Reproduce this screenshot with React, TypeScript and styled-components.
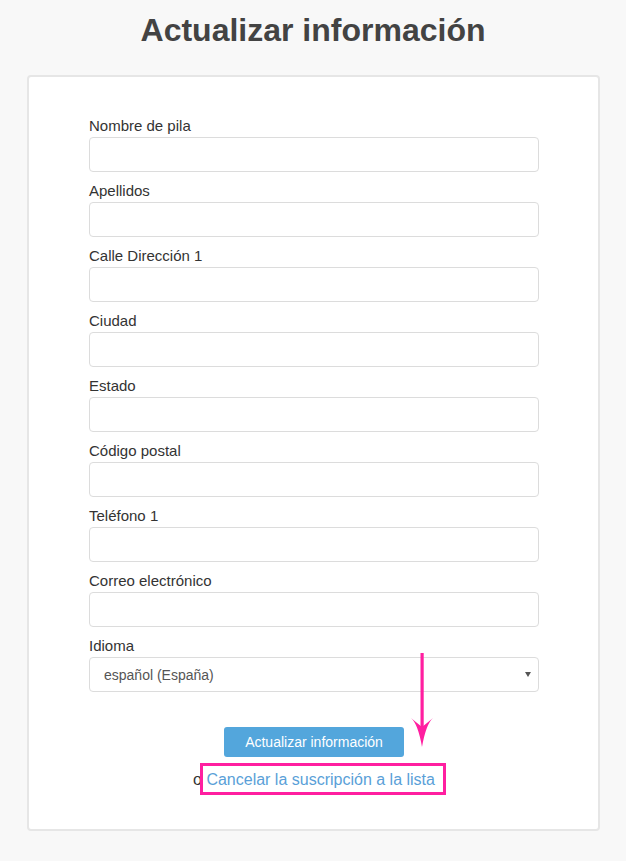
import React from "react";
import styled, { createGlobalStyle } from "styled-components";

const Global = createGlobalStyle`
  html, body { margin: 0; padding: 0; background: #f8f8f8; }
  body { font-family: "Liberation Sans", Arial, sans-serif; color: #333; }
  * { box-sizing: border-box; }
`;

const Page = styled.div`
  position: relative;
  width: 626px;
  min-height: 861px;
  padding-top: 12px;
`;

const Title = styled.h1`
  margin: 0 0 26px;
  text-align: center;
  font-size: 32px;
  font-weight: bold;
  line-height: 37px;
  color: #434343;
`;

const Card = styled.div`
  width: 573px;
  margin: 0 0 0 27px;
  background: #fff;
  border: 2px solid #e6e6e6;
  border-radius: 4px;
  padding: 39px 0 39px 60px;
`;

const Form = styled.form`
  width: 450px;
  display: flex;
  flex-direction: column;
`;

const Field = styled.div`
  display: flex;
  flex-direction: column;
  margin-bottom: 9px;
`;

const Label = styled.label`
  font-size: 15px;
  line-height: 20px;
  margin-bottom: 1px;
  color: #333;
`;

const Input = styled.input`
  height: 35px;
  width: 100%;
  border: 1px solid #dcdcdc;
  border-radius: 4px;
  background: #fff;
  padding: 0 14px;
  font-family: inherit;
  font-size: 14px;
  outline: none;
`;

const SelectWrap = styled.div`
  position: relative;
  height: 35px;
`;

const Select = styled.select`
  appearance: none;
  -webkit-appearance: none;
  height: 35px;
  width: 100%;
  border: 1px solid #dcdcdc;
  border-radius: 4px;
  background: #fff;
  padding: 0 14px;
  font-family: "Liberation Sans", Arial, sans-serif;
  font-size: 14px;
  color: #555;
  outline: none;
`;

const Caret = styled.span`
  position: absolute;
  right: 8px;
  top: 15px;
  width: 0;
  height: 0;
  border-left: 3px solid transparent;
  border-right: 3px solid transparent;
  border-top: 5px solid #555;
  pointer-events: none;
`;

const Actions = styled.div`
  margin-top: 26px;
  display: flex;
  flex-direction: column;
  align-items: center;
  gap: 13px;
`;

const Button = styled.button`
  width: 180px;
  height: 30px;
  border: none;
  border-radius: 3px;
  background: #53a6dc;
  color: #fff;
  font-family: "Liberation Sans", Arial, sans-serif;
  font-size: 14px;
  cursor: pointer;
`;

const Alt = styled.div`
  font-size: 16px;
  line-height: 20px;
  color: #333;
  text-align: center;
`;

const Link = styled.a`
  position: relative;
  color: #5a9fd8;
  text-decoration: none;
  &::after {
    content: "";
    position: absolute;
    left: -6px;
    right: -11px;
    top: -8px;
    bottom: -7px;
    border: 3px solid #ff1fa0;
    pointer-events: none;
  }
`;

const Arrow = styled.svg`
  position: absolute;
  left: 405px;
  top: 650px;
  pointer-events: none;
`;

const fields = [
  "Nombre de pila",
  "Apellidos",
  "Calle Dirección 1",
  "Ciudad",
  "Estado",
  "Código postal",
  "Teléfono 1",
  "Correo electrónico",
];

export default function App() {
  return (
    <Page>
      <Global />
      <Title>Actualizar información</Title>
      <Card>
        <Form onSubmit={(e) => e.preventDefault()}>
          {fields.map((f) => (
            <Field key={f}>
              <Label>{f}</Label>
              <Input type="text" />
            </Field>
          ))}
          <Field>
            <Label>Idioma</Label>
            <SelectWrap>
              <Select defaultValue="es">
                <option value="es">español (España)</option>
              </Select>
              <Caret />
            </SelectWrap>
          </Field>
          <Actions>
            <Button type="submit">Actualizar información</Button>
            <Alt>
              o <Link href="#">Cancelar la suscripción a la lista</Link>
            </Alt>
          </Actions>
        </Form>
      </Card>
      <Arrow width="36" height="100" viewBox="0 0 36 100">
        <rect x="15.5" y="3" width="3.2" height="80" fill="#ff1fa0" />
        <path
          d="M6 68 Q13 74 17 97 Q21 74 28 68 Q22 73 17 77 Q12 73 6 68 Z"
          fill="#ff1fa0"
        />
      </Arrow>
    </Page>
  );
}
